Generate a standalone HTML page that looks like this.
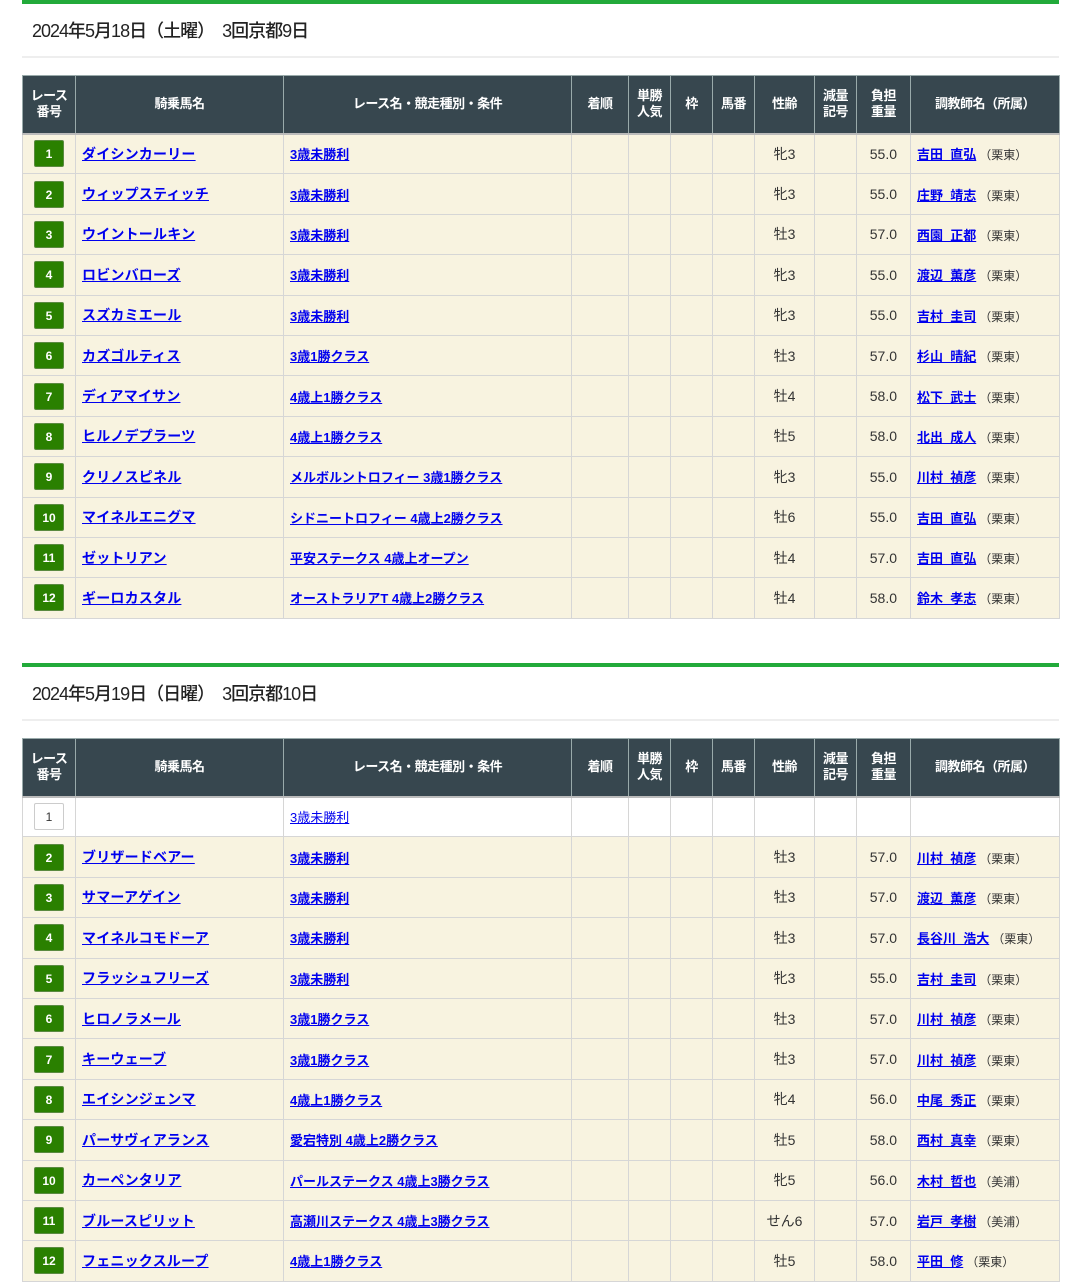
<!DOCTYPE html>
<html><head><meta charset="utf-8">
<style>
*{margin:0;padding:0;box-sizing:border-box}
body{width:1080px;height:1283px;background:#fff;font-family:"Liberation Sans","Noto Sans CJK JP",sans-serif;overflow:hidden;position:relative;color:#333}
.sec{position:absolute;left:22px;width:1037px}
.bar{height:4px;background:#22aa3a}
.ttl{font-size:18px;color:#222;padding-left:10px;letter-spacing:-1px;height:54px;line-height:55px;border-bottom:2px solid #eee;font-weight:500}
table{border-collapse:collapse;table-layout:fixed;width:1037px;margin-top:17px}
th{background:#37474f;color:#fff;font-size:13px;font-weight:bold;line-height:16px;border:1px solid #9aa;height:58px;letter-spacing:-0.5px}
th{border-bottom:2px solid #bbb}
td{background:#f8f3e0;border:1px solid #d6d6d6;height:40.4px;font-size:14px;text-align:center;color:#333}
td a{color:#0000ee;text-decoration:underline}
td.h{text-align:left;padding-left:6px;font-size:14px;font-weight:bold;letter-spacing:0.2px}
td.r{text-align:left;padding-left:6px;font-size:13px;font-weight:bold}
td.w{text-align:right;padding-right:13px}
td.t{text-align:left;padding-left:6px;font-size:13px;font-weight:bold}
td.t span{font-size:12px;color:#333;font-weight:normal;margin-left:3px}
.b{display:inline-block;width:30px;height:27px;line-height:27px;background:#2a8000;color:#fff;font-size:12px;font-weight:bold;border-radius:2px;border:1px solid #5a8a40}
tr.wh td{background:#fff}
.bw{background:#fff;color:#333;border:1px solid #ccc;font-weight:normal}
</style></head><body>

<div class="sec" style="top:0">
<div class="bar"></div>
<div class="ttl">2024年5月18日（土曜）　3回京都9日</div>
<table>
<colgroup><col style="width:53px"><col style="width:208px"><col style="width:288px"><col style="width:57px"><col style="width:42px"><col style="width:42px"><col style="width:42px"><col style="width:60px"><col style="width:42px"><col style="width:54px"><col style="width:149px"></colgroup>
<tr><th>レース<br>番号</th><th>騎乗馬名</th><th>レース名・競走種別・条件</th><th>着順</th><th>単勝<br>人気</th><th>枠</th><th>馬番</th><th>性齢</th><th>減量<br>記号</th><th>負担<br>重量</th><th>調教師名（所属）</th></tr>
<tr><td><span class="b">1</span></td><td class="h"><a>ダイシンカーリー</a></td><td class="r"><a>3歳未勝利</a></td><td></td><td></td><td></td><td></td><td>牝3</td><td></td><td class="w">55.0</td><td class="t"><a>吉田&nbsp;&nbsp;直弘</a><span>（栗東）</span></td></tr>
<tr><td><span class="b">2</span></td><td class="h"><a>ウィップスティッチ</a></td><td class="r"><a>3歳未勝利</a></td><td></td><td></td><td></td><td></td><td>牝3</td><td></td><td class="w">55.0</td><td class="t"><a>庄野&nbsp;&nbsp;靖志</a><span>（栗東）</span></td></tr>
<tr><td><span class="b">3</span></td><td class="h"><a>ウイントールキン</a></td><td class="r"><a>3歳未勝利</a></td><td></td><td></td><td></td><td></td><td>牡3</td><td></td><td class="w">57.0</td><td class="t"><a>西園&nbsp;&nbsp;正都</a><span>（栗東）</span></td></tr>
<tr><td><span class="b">4</span></td><td class="h"><a>ロビンバローズ</a></td><td class="r"><a>3歳未勝利</a></td><td></td><td></td><td></td><td></td><td>牝3</td><td></td><td class="w">55.0</td><td class="t"><a>渡辺&nbsp;&nbsp;薫彦</a><span>（栗東）</span></td></tr>
<tr><td><span class="b">5</span></td><td class="h"><a>スズカミエール</a></td><td class="r"><a>3歳未勝利</a></td><td></td><td></td><td></td><td></td><td>牝3</td><td></td><td class="w">55.0</td><td class="t"><a>吉村&nbsp;&nbsp;圭司</a><span>（栗東）</span></td></tr>
<tr><td><span class="b">6</span></td><td class="h"><a>カズゴルティス</a></td><td class="r"><a>3歳1勝クラス</a></td><td></td><td></td><td></td><td></td><td>牡3</td><td></td><td class="w">57.0</td><td class="t"><a>杉山&nbsp;&nbsp;晴紀</a><span>（栗東）</span></td></tr>
<tr><td><span class="b">7</span></td><td class="h"><a>ディアマイサン</a></td><td class="r"><a>4歳上1勝クラス</a></td><td></td><td></td><td></td><td></td><td>牡4</td><td></td><td class="w">58.0</td><td class="t"><a>松下&nbsp;&nbsp;武士</a><span>（栗東）</span></td></tr>
<tr><td><span class="b">8</span></td><td class="h"><a>ヒルノデプラーツ</a></td><td class="r"><a>4歳上1勝クラス</a></td><td></td><td></td><td></td><td></td><td>牡5</td><td></td><td class="w">58.0</td><td class="t"><a>北出&nbsp;&nbsp;成人</a><span>（栗東）</span></td></tr>
<tr><td><span class="b">9</span></td><td class="h"><a>クリノスピネル</a></td><td class="r"><a>メルボルントロフィー 3歳1勝クラス</a></td><td></td><td></td><td></td><td></td><td>牝3</td><td></td><td class="w">55.0</td><td class="t"><a>川村&nbsp;&nbsp;禎彦</a><span>（栗東）</span></td></tr>
<tr><td><span class="b">10</span></td><td class="h"><a>マイネルエニグマ</a></td><td class="r"><a>シドニートロフィー 4歳上2勝クラス</a></td><td></td><td></td><td></td><td></td><td>牡6</td><td></td><td class="w">55.0</td><td class="t"><a>吉田&nbsp;&nbsp;直弘</a><span>（栗東）</span></td></tr>
<tr><td><span class="b">11</span></td><td class="h"><a>ゼットリアン</a></td><td class="r"><a>平安ステークス 4歳上オープン</a></td><td></td><td></td><td></td><td></td><td>牡4</td><td></td><td class="w">57.0</td><td class="t"><a>吉田&nbsp;&nbsp;直弘</a><span>（栗東）</span></td></tr>
<tr><td><span class="b">12</span></td><td class="h"><a>ギーロカスタル</a></td><td class="r"><a>オーストラリアT 4歳上2勝クラス</a></td><td></td><td></td><td></td><td></td><td>牡4</td><td></td><td class="w">58.0</td><td class="t"><a>鈴木&nbsp;&nbsp;孝志</a><span>（栗東）</span></td></tr>
</table>
</div>

<div class="sec" style="top:663px">
<div class="bar"></div>
<div class="ttl">2024年5月19日（日曜）　3回京都10日</div>
<table>
<colgroup><col style="width:53px"><col style="width:208px"><col style="width:288px"><col style="width:57px"><col style="width:42px"><col style="width:42px"><col style="width:42px"><col style="width:60px"><col style="width:42px"><col style="width:54px"><col style="width:149px"></colgroup>
<tr><th>レース<br>番号</th><th>騎乗馬名</th><th>レース名・競走種別・条件</th><th>着順</th><th>単勝<br>人気</th><th>枠</th><th>馬番</th><th>性齢</th><th>減量<br>記号</th><th>負担<br>重量</th><th>調教師名（所属）</th></tr>
<tr class="wh"><td><span class="b bw">1</span></td><td></td><td class="r" style="font-weight:normal"><a>3歳未勝利</a></td><td></td><td></td><td></td><td></td><td></td><td></td><td></td><td></td></tr>
<tr><td><span class="b">2</span></td><td class="h"><a>ブリザードベアー</a></td><td class="r"><a>3歳未勝利</a></td><td></td><td></td><td></td><td></td><td>牡3</td><td></td><td class="w">57.0</td><td class="t"><a>川村&nbsp;&nbsp;禎彦</a><span>（栗東）</span></td></tr>
<tr><td><span class="b">3</span></td><td class="h"><a>サマーアゲイン</a></td><td class="r"><a>3歳未勝利</a></td><td></td><td></td><td></td><td></td><td>牡3</td><td></td><td class="w">57.0</td><td class="t"><a>渡辺&nbsp;&nbsp;薫彦</a><span>（栗東）</span></td></tr>
<tr><td><span class="b">4</span></td><td class="h"><a>マイネルコモドーア</a></td><td class="r"><a>3歳未勝利</a></td><td></td><td></td><td></td><td></td><td>牡3</td><td></td><td class="w">57.0</td><td class="t"><a>長谷川&nbsp;&nbsp;浩大</a><span>（栗東）</span></td></tr>
<tr><td><span class="b">5</span></td><td class="h"><a>フラッシュフリーズ</a></td><td class="r"><a>3歳未勝利</a></td><td></td><td></td><td></td><td></td><td>牝3</td><td></td><td class="w">55.0</td><td class="t"><a>吉村&nbsp;&nbsp;圭司</a><span>（栗東）</span></td></tr>
<tr><td><span class="b">6</span></td><td class="h"><a>ヒロノラメール</a></td><td class="r"><a>3歳1勝クラス</a></td><td></td><td></td><td></td><td></td><td>牡3</td><td></td><td class="w">57.0</td><td class="t"><a>川村&nbsp;&nbsp;禎彦</a><span>（栗東）</span></td></tr>
<tr><td><span class="b">7</span></td><td class="h"><a>キーウェーブ</a></td><td class="r"><a>3歳1勝クラス</a></td><td></td><td></td><td></td><td></td><td>牡3</td><td></td><td class="w">57.0</td><td class="t"><a>川村&nbsp;&nbsp;禎彦</a><span>（栗東）</span></td></tr>
<tr><td><span class="b">8</span></td><td class="h"><a>エイシンジェンマ</a></td><td class="r"><a>4歳上1勝クラス</a></td><td></td><td></td><td></td><td></td><td>牝4</td><td></td><td class="w">56.0</td><td class="t"><a>中尾&nbsp;&nbsp;秀正</a><span>（栗東）</span></td></tr>
<tr><td><span class="b">9</span></td><td class="h"><a>パーサヴィアランス</a></td><td class="r"><a>愛宕特別 4歳上2勝クラス</a></td><td></td><td></td><td></td><td></td><td>牡5</td><td></td><td class="w">58.0</td><td class="t"><a>西村&nbsp;&nbsp;真幸</a><span>（栗東）</span></td></tr>
<tr><td><span class="b">10</span></td><td class="h"><a>カーペンタリア</a></td><td class="r"><a>パールステークス 4歳上3勝クラス</a></td><td></td><td></td><td></td><td></td><td>牝5</td><td></td><td class="w">56.0</td><td class="t"><a>木村&nbsp;&nbsp;哲也</a><span>（美浦）</span></td></tr>
<tr><td><span class="b">11</span></td><td class="h"><a>ブルースピリット</a></td><td class="r"><a>高瀬川ステークス 4歳上3勝クラス</a></td><td></td><td></td><td></td><td></td><td>せん6</td><td></td><td class="w">57.0</td><td class="t"><a>岩戸&nbsp;&nbsp;孝樹</a><span>（美浦）</span></td></tr>
<tr><td><span class="b">12</span></td><td class="h"><a>フェニックスループ</a></td><td class="r"><a>4歳上1勝クラス</a></td><td></td><td></td><td></td><td></td><td>牡5</td><td></td><td class="w">58.0</td><td class="t"><a>平田&nbsp;&nbsp;修</a><span>（栗東）</span></td></tr>
</table>
</div>
</body></html>
